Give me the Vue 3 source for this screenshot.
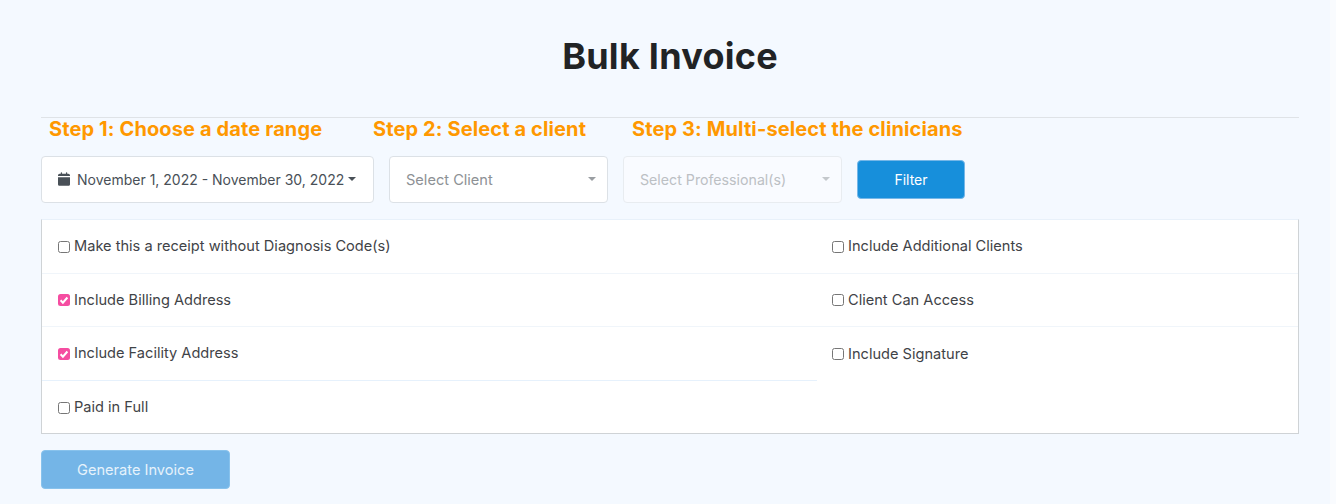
<script setup>
const leftOptions = [
  { label: "Make this a receipt without Diagnosis Code(s)", checked: false },
  { label: "Include Billing Address", checked: true },
  { label: "Include Facility Address", checked: true },
  { label: "Paid in Full", checked: false },
];

const rightOptions = [
  { label: "Include Additional Clients", checked: false },
  { label: "Client Can Access", checked: false },
  { label: "Include Signature", checked: false },
];
</script>

<template>
  <main class="page">
    <h1 class="title">Bulk Invoice</h1>
    <hr class="rule" />

    <div class="steps">
      <span class="step step-one">Step 1: Choose a date range</span>
      <span class="step step-two">Step 2: Select a client</span>
      <span class="step">Step 3: Multi-select the clinicians</span>
    </div>

    <div class="filters">
      <div class="control date">
        <svg class="calendar" viewBox="0 0 448 512" aria-hidden="true">
          <path
            d="M152 24c0-13-11-24-24-24s-24 11-24 24v40H64C29 64 0 93 0 128v16h448v-16c0-35-29-64-64-64h-40V24c0-13-11-24-24-24s-24 11-24 24v40H152V24zM448 192H0v256c0 35 29 64 64 64h320c35 0 64-29 64-64V192z"
          />
        </svg>
        <span>November 1, 2022 - November 30, 2022</span>
        <i class="caret caret-dark"></i>
      </div>

      <div class="control select">
        <span class="placeholder">Select Client</span>
        <i class="caret"></i>
      </div>

      <div class="control select disabled">
        <span class="placeholder">Select Professional(s)</span>
        <i class="caret"></i>
      </div>

      <button class="btn filter-btn" type="button">Filter</button>
    </div>

    <section class="options">
      <div class="column column-left">
        <label v-for="option in leftOptions" :key="option.label" class="option">
          <span class="box" :class="{ 'box-checked': option.checked }">
            <svg v-if="option.checked" viewBox="0 0 12 12" aria-hidden="true">
              <path d="M2.6 6.3l2.3 2.4 4.5-5.2" />
            </svg>
          </span>
          <span>{{ option.label }}</span>
        </label>
      </div>
      <div class="column column-right">
        <label v-for="option in rightOptions" :key="option.label" class="option">
          <span class="box"></span>
          <span>{{ option.label }}</span>
        </label>
      </div>
    </section>

    <button class="btn generate-btn" type="button">Generate Invoice</button>
  </main>
</template>

<style scoped>
.page {
  box-sizing: border-box;
  height: 504px;
  padding: 0 31px 0 41px;
  overflow: hidden;
  background: #f4f9ff;
  border-right: 6px solid #f9fbfe;
  color: #3f4347;
  font-family: Inter, "Open Sans", sans-serif;
}

.title {
  margin: 0;
  padding-top: 35px;
  height: 117px;
  box-sizing: border-box;
  color: #212325;
  font-size: 36px;
  line-height: 42px;
  font-weight: 700;
  letter-spacing: 0.25px;
  text-align: center;
}

.rule {
  height: 1px;
  margin: 0;
  border: 0;
  background: #dfe3e7;
}

.steps {
  display: flex;
  height: 37px;
  box-sizing: border-box;
  padding-left: 8px;
  color: #ff9800;
  font-size: 20px;
  line-height: 23px;
  font-weight: 700;
  letter-spacing: 0.12px;
}

.step-one {
  width: 324px;
}

.step-two {
  width: 259px;
}

.filters {
  display: flex;
  align-items: center;
  gap: 15px;
  height: 48px;
}

.control {
  display: flex;
  align-items: center;
  box-sizing: border-box;
  height: 47px;
  border: 1px solid #dce1e6;
  border-radius: 4px;
  background: #fff;
  font-size: 14px;
}

.date {
  width: 333px;
  padding: 0 16px;
  color: #495057;
  white-space: nowrap;
}

.calendar {
  flex: none;
  width: 12px;
  height: 14px;
  margin-right: 7px;
  fill: #495057;
}

.select {
  justify-content: space-between;
  width: 219px;
  padding: 0 11px 0 16px;
}

.placeholder {
  color: #8d9195;
  font-size: 14.6px;
  line-height: 20px;
  padding-top: 1px;
}

.disabled {
  width: 219px;
  background: #f9fbff;
  border-color: #e8ecf0;
}

.disabled .placeholder {
  color: #bcc0c4;
  font-size: 14.2px;
}

.caret {
  flex: none;
  width: 0;
  height: 0;
  border-top: 4px solid #9a9ea2;
  border-left: 4px solid transparent;
  border-right: 4px solid transparent;
}

.caret-dark {
  margin-left: 4px;
  border-top-color: #495057;
}

.disabled .caret {
  border-top-color: #c4c8cc;
}

.btn {
  border: 1px solid #75b7e8;
  border-radius: 4px;
  color: #fff;
  font-family: inherit;
  font-size: 14px;
}

.filter-btn {
  width: 108px;
  height: 39px;
  background: #178fdb;
}

.options {
  display: flex;
  box-sizing: border-box;
  height: 215px;
  margin-top: 16px;
  border: 1px solid #cfd3d6;
  border-top-color: #e8f1fa;
  background: #fff;
}

.column-left {
  width: 775px;
}

.column-right {
  flex: 1;
}

.column-right .option {
  padding-left: 15px;
}

.option {
  display: flex;
  align-items: center;
  box-sizing: border-box;
  height: 53.5px;
  padding: 0 16px;
  border-bottom: 1px solid #f0f5fa;
  font-size: 14.6px;
  white-space: nowrap;
}

.column-left .option:nth-child(3) {
  border-bottom-color: #e6f1fc;
}

.column-left .option:last-child,
.column-right .option:last-child {
  border-bottom: 0;
}

.box {
  display: flex;
  flex: none;
  box-sizing: border-box;
  width: 12px;
  height: 12px;
  margin: 1px 4px 0 0;
  border: 1px solid #767676;
  border-radius: 2.5px;
  background: #fff;
}

.box-checked {
  border: 0;
  background: #f54da1;
}

.box svg {
  width: 12px;
  height: 12px;
  fill: none;
  stroke: #fff;
  stroke-width: 2;
}

.generate-btn {
  display: block;
  width: 189px;
  height: 39px;
  margin-top: 16px;
  background: #74b5e7;
  border-color: #88c2ec;
  color: #e6f2fb;
  font-size: 14.6px;
}
</style>

<style>
html,
body {
  background: #f4f9ff;
}
</style>
